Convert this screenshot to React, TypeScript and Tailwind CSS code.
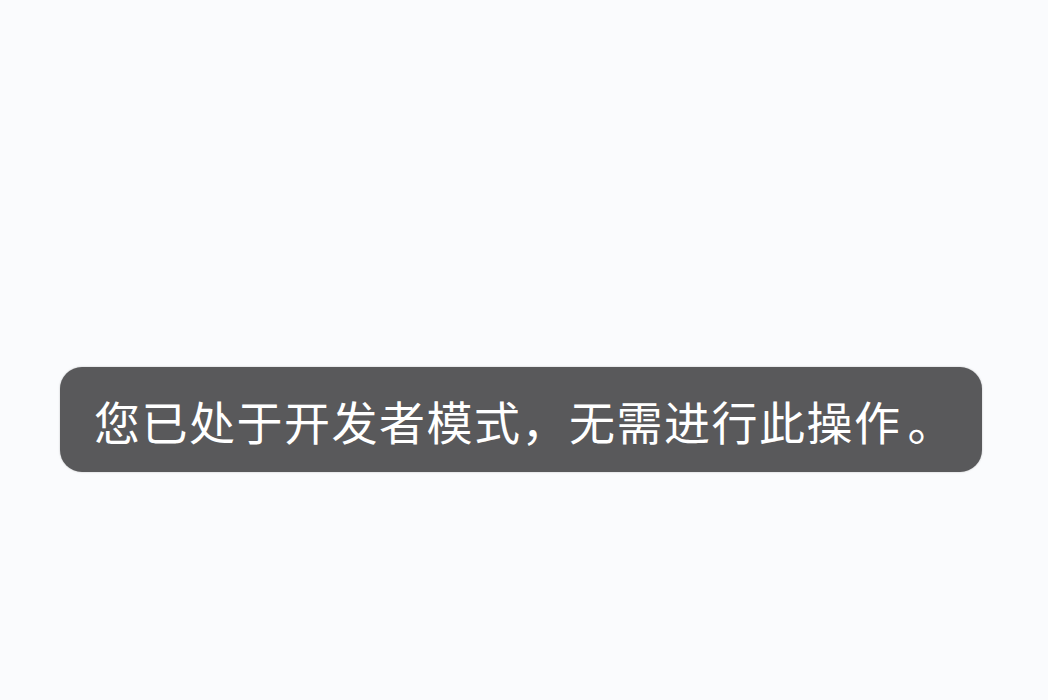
export default function App() {
  return (
    <div className="w-[1048px] h-[700px] bg-[#fafbfd] pt-[367px] pl-[60px] overflow-hidden">
      <div className="w-[922px] h-[105px] rounded-[22px] bg-[#59595b] flex items-center pl-[34px] shadow-[0_0_2px_rgba(0,0,0,0.25)]">
        <span
          className="text-white text-[46px] leading-none whitespace-nowrap font-normal tracking-[1.5px]"
          style={{ fontFamily: '"Noto Sans CJK SC", "Noto Sans", sans-serif' }}
        >
          您已处于开发者模式，无需进行此操作<span className="ml-[6px]">。</span>
        </span>
      </div>
    </div>
  );
}
